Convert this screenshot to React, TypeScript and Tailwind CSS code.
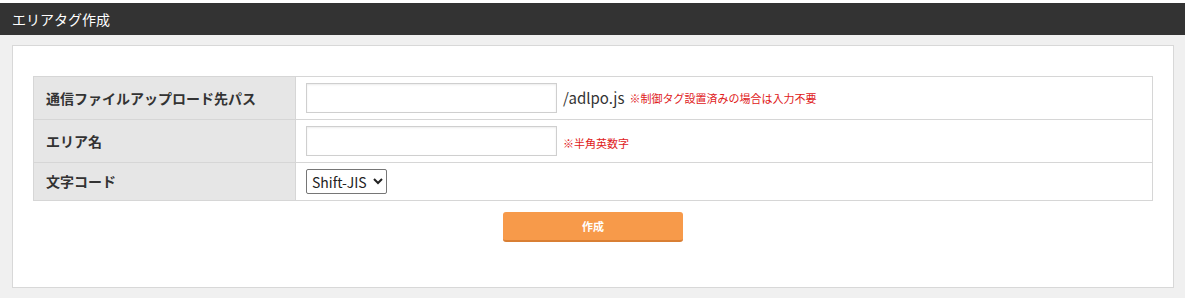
const jp = { fontFamily: '"Noto Sans CJK JP", "Noto Sans", sans-serif' };

function TextField() {
  return (
    <input
      type="text"
      className="h-[30px] w-[251px] border border-[#cfcfcf] bg-white px-2 text-[14px] outline-none shadow-[inset_0_1px_2px_rgba(0,0,0,0.08)]"
    />
  );
}

export default function App() {
  return (
    <div className="min-h-[302px] bg-white pr-[4px] pt-[3px] text-[#333]" style={jp}>
      <div className="flex h-[32px] items-center bg-[#333333] pl-[12px] text-[14px] text-white">エリアタグ作成</div>

      <div className="bg-[#f0f0f0] pb-[10px] pl-[12px] pr-[11px] pt-[10px]">
        <div className="flex h-[243px] flex-col items-center border border-[#d8d8d8] bg-white px-[20px] pt-[30px]">
          <table className="w-full border-collapse border border-[#d6d6d6] text-[14px]">
            <tbody>
              <tr className="h-[43px]">
                <th className="w-[262px] border border-[#d6d6d6] bg-[#e6e6e6] pl-[12px] text-left font-bold">通信ファイルアップロード先パス</th>
                <td className="border border-[#d6d6d6] pl-[10px]">
                  <div className="flex items-center">
                    <TextField />
                    <span className="ml-[6px] text-[15px] text-[#333]">/adlpo.js</span>
                    <span className="ml-[5px] text-[11px] text-[#e0201a]">※制御タグ設置済みの場合は入力不要</span>
                  </div>
                </td>
              </tr>
              <tr className="h-[43px]">
                <th className="border border-[#d6d6d6] bg-[#e6e6e6] pl-[12px] text-left font-bold">エリア名</th>
                <td className="border border-[#d6d6d6] pl-[10px]">
                  <div className="flex items-center">
                    <TextField />
                    <span className="ml-[6px] mt-[4px] text-[11px] text-[#e0201a]">※半角英数字</span>
                  </div>
                </td>
              </tr>
              <tr className="h-[38px]">
                <th className="border border-[#d6d6d6] bg-[#e6e6e6] pl-[12px] text-left font-bold">文字コード</th>
                <td className="border border-[#d6d6d6] pl-[10px]">
                  <select className="h-[25px] w-[81px] rounded-[2px] border border-[#767676] bg-white pl-[1px] text-[14px] text-[#222]">
                    <option>Shift-JIS</option>
                    <option>UTF-8</option>
                    <option>EUC-JP</option>
                  </select>
                </td>
              </tr>
            </tbody>
          </table>

          <button
            type="button"
            className="mt-[11px] h-[30px] w-[180px] rounded-[3px] border-b-2 border-[#d97f34] bg-[#f79a4a] text-[11px] font-bold text-white"
          >
            作成
          </button>
        </div>
      </div>
    </div>
  );
}
